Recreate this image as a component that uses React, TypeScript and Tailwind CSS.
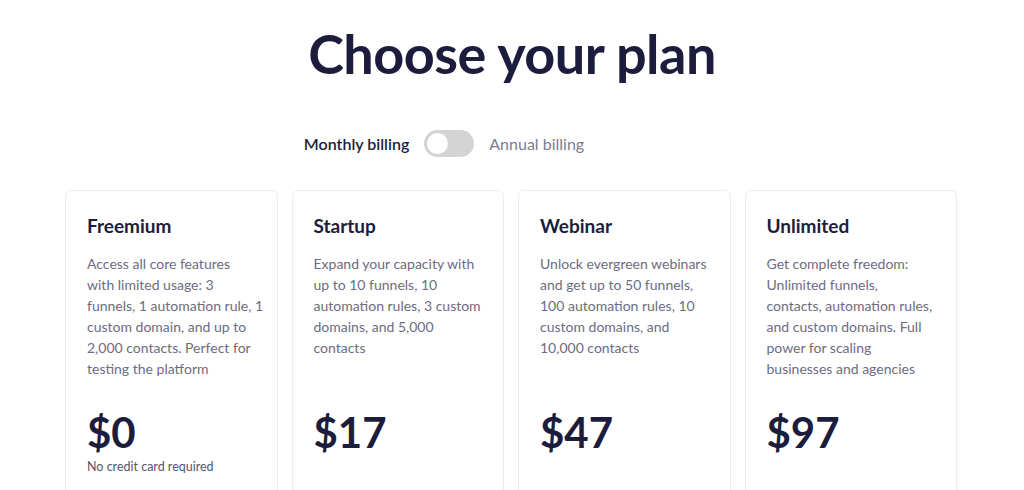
const plans = [
  {
    name: 'Freemium',
    lines: [
      'Access all core features',
      'with limited usage: 3',
      'funnels, 1 automation rule, 1',
      'custom domain, and up to',
      '2,000 contacts. Perfect for',
      'testing the platform',
    ],
    price: '$0',
    note: 'No credit card required',
  },
  {
    name: 'Startup',
    lines: ['Expand your capacity with', 'up to 10 funnels, 10', 'automation rules, 3 custom', 'domains, and 5,000', 'contacts'],
    price: '$17',
  },
  {
    name: 'Webinar',
    lines: [
      'Unlock evergreen webinars',
      'and get up to 50 funnels,',
      '100 automation rules, 10',
      'custom domains, and',
      '10,000 contacts',
    ],
    price: '$47',
  },
  {
    name: 'Unlimited',
    lines: [
      'Get complete freedom:',
      'Unlimited funnels,',
      'contacts, automation rules,',
      'and custom domains. Full',
      'power for scaling',
      'businesses and agencies',
    ],
    price: '$97',
  },
];

export default function App() {
  return (
    <div className="min-h-screen bg-white flex flex-col items-center pt-[22px] font-['Lato',sans-serif] text-[#1c1d3d]">
      <h1 className="text-[54px] leading-[64px] font-bold tracking-[-0.5px]">Choose your plan</h1>

      {/* Billing toggle */}
      <div className="mt-[44px] flex items-center gap-[15px]">
        <span className="text-[16px] font-semibold">Monthly billing</span>
        <button
          className="w-[50px] h-[27px] rounded-full bg-[#d4d4d4] flex items-center px-[3px]"
          aria-label="Toggle annual billing"
        >
          <span className="w-[21px] h-[21px] rounded-full bg-white" />
        </button>
        <span className="text-[16px] text-[#7c7c92]">Annual billing</span>
        <span className="w-[121px]" />
      </div>

      {/* Plans */}
      <div className="mt-[33px] grid grid-cols-4 gap-[14px] w-[892px] -translate-x-[1px]">
        {plans.map((plan) => (
          <div key={plan.name} className="border border-[#ededf0] rounded-[6px] px-[21px] pt-[23px] pb-[20px] bg-white">
            <h3 className="text-[19px] leading-[24px] font-bold">{plan.name}</h3>
            <p className="mt-[15px] h-[126px] text-[14px] leading-[21px] text-[#6c6c82] whitespace-nowrap">
              {plan.lines.map((line) => (
                <span key={line} className="block">
                  {line}
                </span>
              ))}
            </p>
            <div className="mt-[31px] text-[42px] leading-[44px] font-bold">{plan.price}</div>
            {plan.note && <p className="mt-[5px] text-[12.5px] leading-[16px] text-[#55566b]">{plan.note}</p>}
          </div>
        ))}
      </div>
    </div>
  );
}
